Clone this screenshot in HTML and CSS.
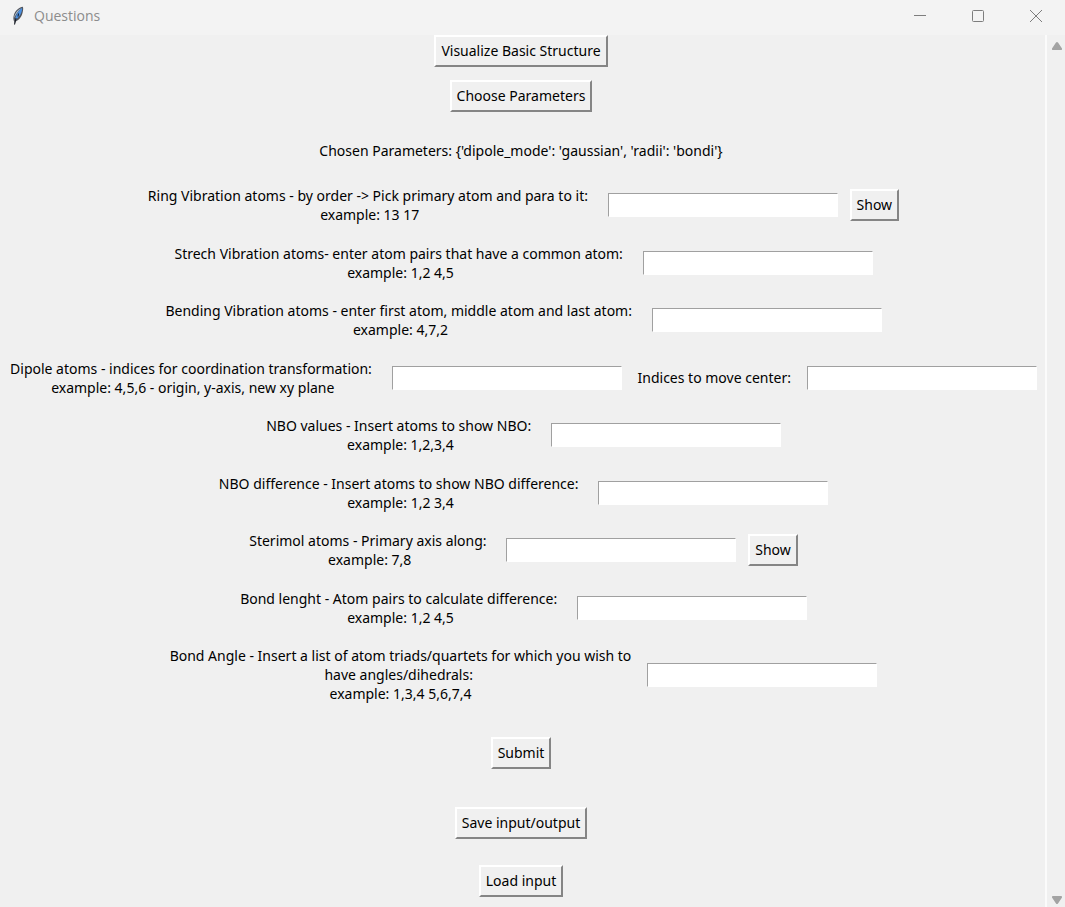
FILE: index.html
```html
<!DOCTYPE html>
<html lang="en">
<head>
<meta charset="utf-8">
<title>Questions</title>
<link rel="stylesheet" href="styles.css">
</head>
<body>
<div class="window">
  <header class="titlebar">
    <svg class="feather" width="14" height="20" viewBox="0 0 14 20" aria-hidden="true">
      <path d="M11.800 .8C8.500 1 4.500 4.500 3 8.500C2 11.500 2.300 14 3.200 15.500L3.500 19L4.600 15.500C7.500 14.500 10.500 11 11.500 7C12.200 4.500 12.500 2 11.800 .8Z" fill="#50545c"/>
      <path d="M11.200 1.800C8.500 3.500 5 8 3.800 14C8 12 11.300 7 11.200 1.800Z" fill="#4a90e2"/>
      <path d="M10 2.200C6.500 4 3.400 8 3.200 12C4.600 8.500 7 5.300 10 2.200Z" fill="#b4c6d8"/>
      <path d="M7.500 7.500L7 10.500M5 12L3.600 18.500" fill="none" stroke="#151a22"/>
    </svg>
    <h1 class="title">Questions</h1>
    <div class="controls">
      <button class="control" type="button" aria-label="Minimize"><svg width="12" height="12" viewBox="0 0 12 12"><path d="M0 5.500H12"/></svg></button>
      <button class="control" type="button" aria-label="Maximize"><svg width="12" height="12" viewBox="0 0 12 12"><rect x=".5" y=".5" width="11" height="11" rx="1"/></svg></button>
      <button class="control" type="button" aria-label="Close"><svg width="12" height="12" viewBox="0 0 12 12"><path d="M0 0L12 12M12 0L0 12"/></svg></button>
    </div>
  </header>
  <div class="body">
    <form class="content">
      <div class="top">
        <button class="btn" type="button">Visualize Basic Structure</button>
        <button class="btn" type="button">Choose Parameters</button>
      </div>
      <p class="chosen">Chosen Parameters: {'dipole_mode': 'gaussian', 'radii': 'bondi'}</p>
      <div class="fields">
        <div class="row">
          <label class="label" for="ring">Ring Vibration atoms - by order -&gt; Pick primary atom and para to it:&nbsp;<br>example: 13 17</label>
          <input class="entry" id="ring" type="text">
          <button class="btn show" type="button">Show</button>
        </div>
        <div class="row">
          <label class="label" for="stretch">Strech Vibration atoms- enter atom pairs that have a common atom:&nbsp;<br>example: 1,2 4,5</label>
          <input class="entry" id="stretch" type="text">
        </div>
        <div class="row">
          <label class="label" for="bending">Bending Vibration atoms - enter first atom, middle atom and last atom:&nbsp;<br>example: 4,7,2</label>
          <input class="entry" id="bending" type="text">
        </div>
        <div class="row">
          <label class="label" for="dipole">Dipole atoms - indices for coordination transformation:&nbsp;<br>example: 4,5,6 - origin, y-axis, new xy plane</label>
          <input class="entry" id="dipole" type="text">
          <label class="label side" for="center">Indices to move center:</label>
          <input class="entry" id="center" type="text">
        </div>
        <div class="row">
          <label class="label" for="nbo">NBO values - Insert atoms to show NBO:&nbsp;<br>example: 1,2,3,4</label>
          <input class="entry" id="nbo" type="text">
        </div>
        <div class="row">
          <label class="label" for="nbodiff">NBO difference - Insert atoms to show NBO difference:&nbsp;<br>example: 1,2 3,4</label>
          <input class="entry" id="nbodiff" type="text">
        </div>
        <div class="row">
          <label class="label" for="sterimol">Sterimol atoms - Primary axis along:&nbsp;<br>example: 7,8</label>
          <input class="entry" id="sterimol" type="text">
          <button class="btn show" type="button">Show</button>
        </div>
        <div class="row">
          <label class="label" for="length">Bond lenght - Atom pairs to calculate difference:&nbsp;<br>example: 1,2 4,5</label>
          <input class="entry" id="length" type="text">
        </div>
        <div class="row">
          <label class="label" for="angle">Bond Angle - Insert a list of atom triads/quartets for which you wish to<br>have angles/dihedrals:&nbsp;<br>example: 1,3,4 5,6,7,4</label>
          <input class="entry" id="angle" type="text">
        </div>
      </div>
      <button class="btn submit" type="submit">Submit</button>
      <div class="files">
        <button class="btn" type="button">Save input/output</button>
        <button class="btn" type="button">Load input</button>
      </div>
    </form>
    <div class="scrollbar">
      <svg width="12" height="8" viewBox="0 0 12 8"><path d="M6 0Q6.600 0 7 .6L11 6.500Q11.400 8 10.200 8H1.800Q.6 8 1 6.500L5 .6Q5.400 0 6 0Z"/></svg>
      <svg width="12" height="8" viewBox="0 0 12 8"><path d="M6 8Q6.600 8 7 7.400L11 1.500Q11.400 0 10.200 0H1.800Q.6 0 1 1.500L5 7.400Q5.400 8 6 8Z"/></svg>
    </div>
  </div>
</div>
</body>
</html>
```
FILE: styles.css
```css
* {
  box-sizing: border-box;
}

body {
  margin: 0;
  background: #f0f0f0;
  color: #000;
  font: 14px/19px "Noto Sans", "Open Sans", sans-serif;
}

.window {
  display: flex;
  flex-direction: column;
  min-height: 100vh;
}

.titlebar {
  display: flex;
  align-items: center;
  height: 35px;
  padding: 0 0 4px 11px;
  background: #f3f3f3;
}

.title {
  margin: 0 0 0 9px;
  color: #8c8c8c;
  font-family: "Open Sans", sans-serif;
  font-size: 14px;
  font-weight: 400;
}

.controls {
  display: flex;
  margin-left: auto;
}

.control {
  display: flex;
  align-items: center;
  justify-content: center;
  width: 58px;
  height: 31px;
  padding: 0;
  border: 0;
  background: transparent;
}

.control svg {
  fill: none;
  stroke: #7d7d7d;
}

.body {
  display: flex;
  flex: 1;
}

.content {
  display: flex;
  flex: 1;
  flex-direction: column;
  align-items: center;
  padding: 0 3px 10px 0;
}

.top {
  display: flex;
  flex-direction: column;
  align-items: center;
  gap: 13px;
}

.btn {
  height: 32px;
  padding: 0 5px 1px;
  border: 2px solid;
  border-color: #fff #858585 #858585 #fff;
  background: #f0f0f0;
  color: #000;
  font: inherit;
  white-space: nowrap;
}

.chosen {
  margin: 29px 0 26px;
}

.fields {
  display: flex;
  flex: 1;
  flex-direction: column;
  align-items: center;
  justify-content: space-between;
}

.row {
  display: flex;
  align-items: center;
  padding-left: 5px;
}

.label {
  margin-right: 16px;
  text-align: center;
  white-space: nowrap;
}

.side {
  margin-left: 16px;
}

.entry {
  width: 230px;
  height: 24px;
  padding: 0 3px;
  border: 1px solid;
  border-color: #a0a0a0 #fff #fff #a0a0a0;
  background: #fff;
  font: inherit;
}

.show {
  margin-left: 12px;
}

.submit {
  margin: 34px 0 38px;
}

.files {
  display: flex;
  flex-direction: column;
  align-items: center;
  gap: 26px;
}

.scrollbar {
  display: flex;
  flex-direction: column;
  align-items: center;
  justify-content: space-between;
  width: 20px;
  padding: 7px 0 3px 1px;
  border-left: 2px solid #fbfbfb;
}

.scrollbar svg {
  fill: #a3a3a3;
}
```
